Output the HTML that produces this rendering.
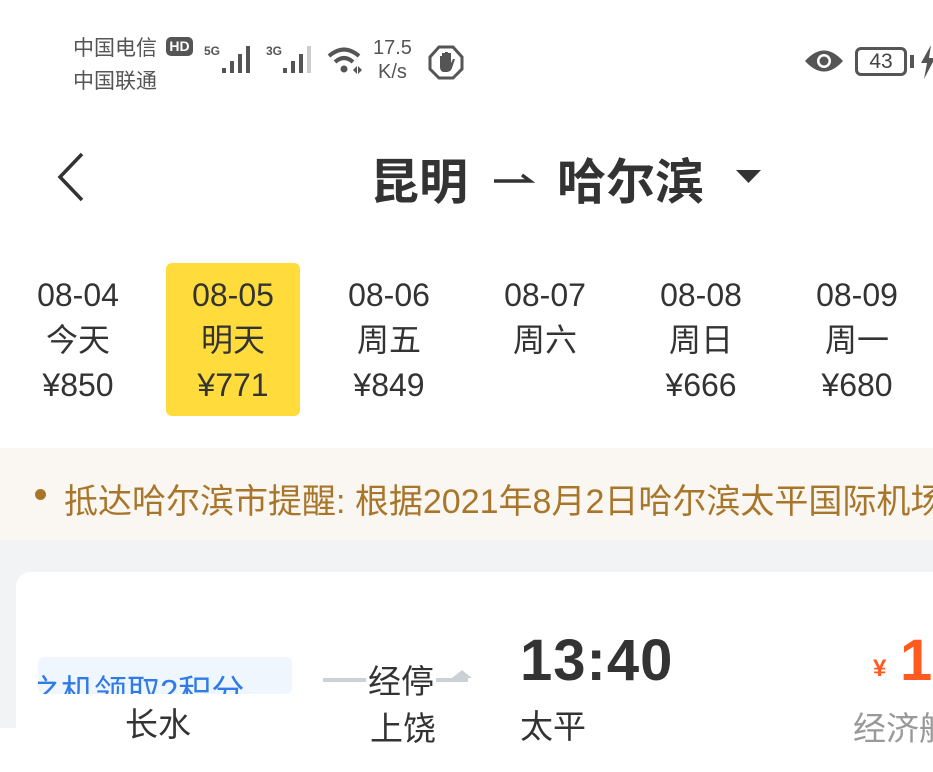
<!DOCTYPE html>
<html><head><meta charset="utf-8"><style>
*{margin:0;padding:0;box-sizing:border-box}
body{width:933px;height:728px;overflow:hidden;background:#fff;font-family:"Liberation Sans","Noto Sans CJK SC",sans-serif;position:relative;color:#333}
.a{position:absolute;white-space:nowrap}
.sb{color:#555;font-size:21px}
.tab{position:absolute;top:263px;width:134px;height:153px;text-align:center;font-size:32px;line-height:45px;padding-top:10px;color:#333}
</style></head><body>
<div class="a sb" style="left:73px;top:32px">中国电信</div>
<div class="a" style="left:166px;top:37px;width:27px;height:19px;background:#555;border-radius:5px;color:#fff;font-size:14px;font-weight:bold;text-align:center;line-height:19px">HD</div>
<div class="a sb" style="left:73px;top:65px">中国联通</div>
<div class="a" style="left:204px;top:44px;font-size:12px;font-weight:bold;color:#555">5G</div>
<svg class="a" style="left:222px;top:44px" width="34" height="32"><g fill="#555"><rect x="0" y="24" width="4" height="5"/><rect x="8" y="17" width="4" height="12"/><rect x="16" y="10" width="4" height="19"/><rect x="24" y="2" width="4" height="27"/></g></svg>
<div class="a" style="left:266px;top:44px;font-size:12px;font-weight:bold;color:#555">3G</div>
<svg class="a" style="left:283px;top:44px" width="34" height="32"><g fill="#555"><rect x="0" y="24" width="4" height="5"/><rect x="8" y="17" width="4" height="12"/><rect x="16" y="10" width="4" height="19"/></g><rect x="24" y="2" width="4" height="27" fill="#ccc"/></svg>
<svg class="a" style="left:326px;top:44px" width="40" height="34"><g fill="none" stroke="#555" stroke-width="4"><path d="M3 12 Q18 -1 33 12"/><path d="M9 18 Q18 10 27 18"/></g><circle cx="18" cy="25" r="3.5" fill="#555"/><path d="M27 26 l4-4v8zM32 22l4 4-4 4z" fill="#555"/></svg>
<div class="a" style="left:373px;top:36px;font-size:20px;color:#555;line-height:24px;text-align:center">17.5<br>K/s</div>
<svg class="a" style="left:428px;top:44px" width="36" height="36"><path d="M11 3h14l9 10v12l-9 9H11l-9-9V13z" fill="none" stroke="#555" stroke-width="3"/><path d="M12 20v-8h2v6V9h3v9V8h3v10V9h3v10l2-4h2l-3 9c-1 3-3 4-6 4h-2c-3 0-4-3-4-5z" fill="#555"/></svg>
<svg class="a" style="left:803px;top:48px" width="42" height="26"><path d="M2 13 Q21 -8 40 13 Q21 34 2 13z" fill="#555"/><circle cx="21" cy="13" r="7" fill="#fff"/><circle cx="21" cy="13" r="4.5" fill="#555"/></svg>
<div class="a" style="left:855px;top:47px;width:52px;height:29px;border:3px solid #555;border-radius:6px;font-size:21px;color:#444;text-align:center;line-height:23px">43</div>
<div class="a" style="left:910px;top:55px;width:4px;height:13px;background:#555"></div>
<svg class="a" style="left:921px;top:45px" width="14" height="34"><path d="M10 0 L0 18 h6 L3 34 L14 13 h-6z" fill="#555"/></svg>

<svg class="a" style="left:52px;top:150px" width="36" height="54"><path d="M30 4 L8 27 L30 50" fill="none" stroke="#333" stroke-width="3.5"/></svg>
<div class="a" style="left:370px;top:143px;font-size:49px;font-weight:bold;color:#333">昆明</div>
<svg class="a" style="left:492px;top:172px" width="44" height="14"><path d="M2 9h36l-8-6" fill="none" stroke="#333" stroke-width="3.5"/></svg>
<div class="a" style="left:557px;top:143px;font-size:49px;font-weight:bold;color:#333">哈尔滨</div>
<svg class="a" style="left:736px;top:170px" width="26" height="16"><path d="M0 0h25L12.5 13z" fill="#333"/></svg>

<div class="tab" style="left:11px">08-04<br>今天<br>¥850</div>
<div class="tab" style="left:166px;background:#ffdc3c;border-radius:6px">08-05<br>明天<br>¥771</div>
<div class="tab" style="left:322px">08-06<br>周五<br>¥849</div>
<div class="tab" style="left:478px">08-07<br>周六<br>&nbsp;</div>
<div class="tab" style="left:634px">08-08<br>周日<br>¥666</div>
<div class="tab" style="left:790px">08-09<br>周一<br>¥680</div>

<div class="a" style="left:0;top:448px;width:933px;height:92px;background:#faf6f1"></div>
<div class="a" style="left:35px;top:489px;width:11px;height:11px;border-radius:50%;background:#a8762a"></div>
<div class="a" style="left:64px;top:474px;font-size:34px;color:#a8762a">抵达哈尔滨市提醒: 根据2021年8月2日哈尔滨太平国际机场</div>

<div class="a" style="left:0;top:540px;width:933px;height:188px;background:#f2f3f5"></div>
<div class="a" style="left:16px;top:572px;width:940px;height:200px;background:#fff;border-radius:14px"></div>
<div class="a" style="left:38px;top:657px;width:254px;height:37px;background:#f0f6fd;border-radius:6px;overflow:hidden;color:#2f7be8;font-size:33px;line-height:70px;text-indent:-10px">之机领取2积分</div>
<div class="a" style="left:125px;top:698px;font-size:33px;color:#333">长水</div>
<div class="a" style="left:323px;top:678px;width:145px;height:4px;background:#ccd0d7"></div>
<svg class="a" style="left:452px;top:670px" width="22" height="14"><path d="M0 8h20L10 0z" fill="#ccd0d7"/></svg>
<div class="a" style="left:366px;top:662px;font-size:33px;color:#333;background:#fff;padding:0 2px;line-height:40px">经停</div>
<div class="a" style="left:370px;top:702px;font-size:33px;color:#333">上饶</div>
<div class="a" style="left:520px;top:627px;font-size:58px;font-weight:bold;color:#333;letter-spacing:1px">13:40</div>
<div class="a" style="left:520px;top:700px;font-size:33px;color:#333">太平</div>
<div class="a" style="left:873px;top:655px;font-size:24px;color:#ff5a1f;font-weight:bold">¥</div>
<div class="a" style="left:900px;top:627px;font-size:58px;font-weight:bold;color:#ff5a1f">1</div>
<div class="a" style="left:853px;top:702px;font-size:33px;color:#999">经济舱</div>
</body></html>
